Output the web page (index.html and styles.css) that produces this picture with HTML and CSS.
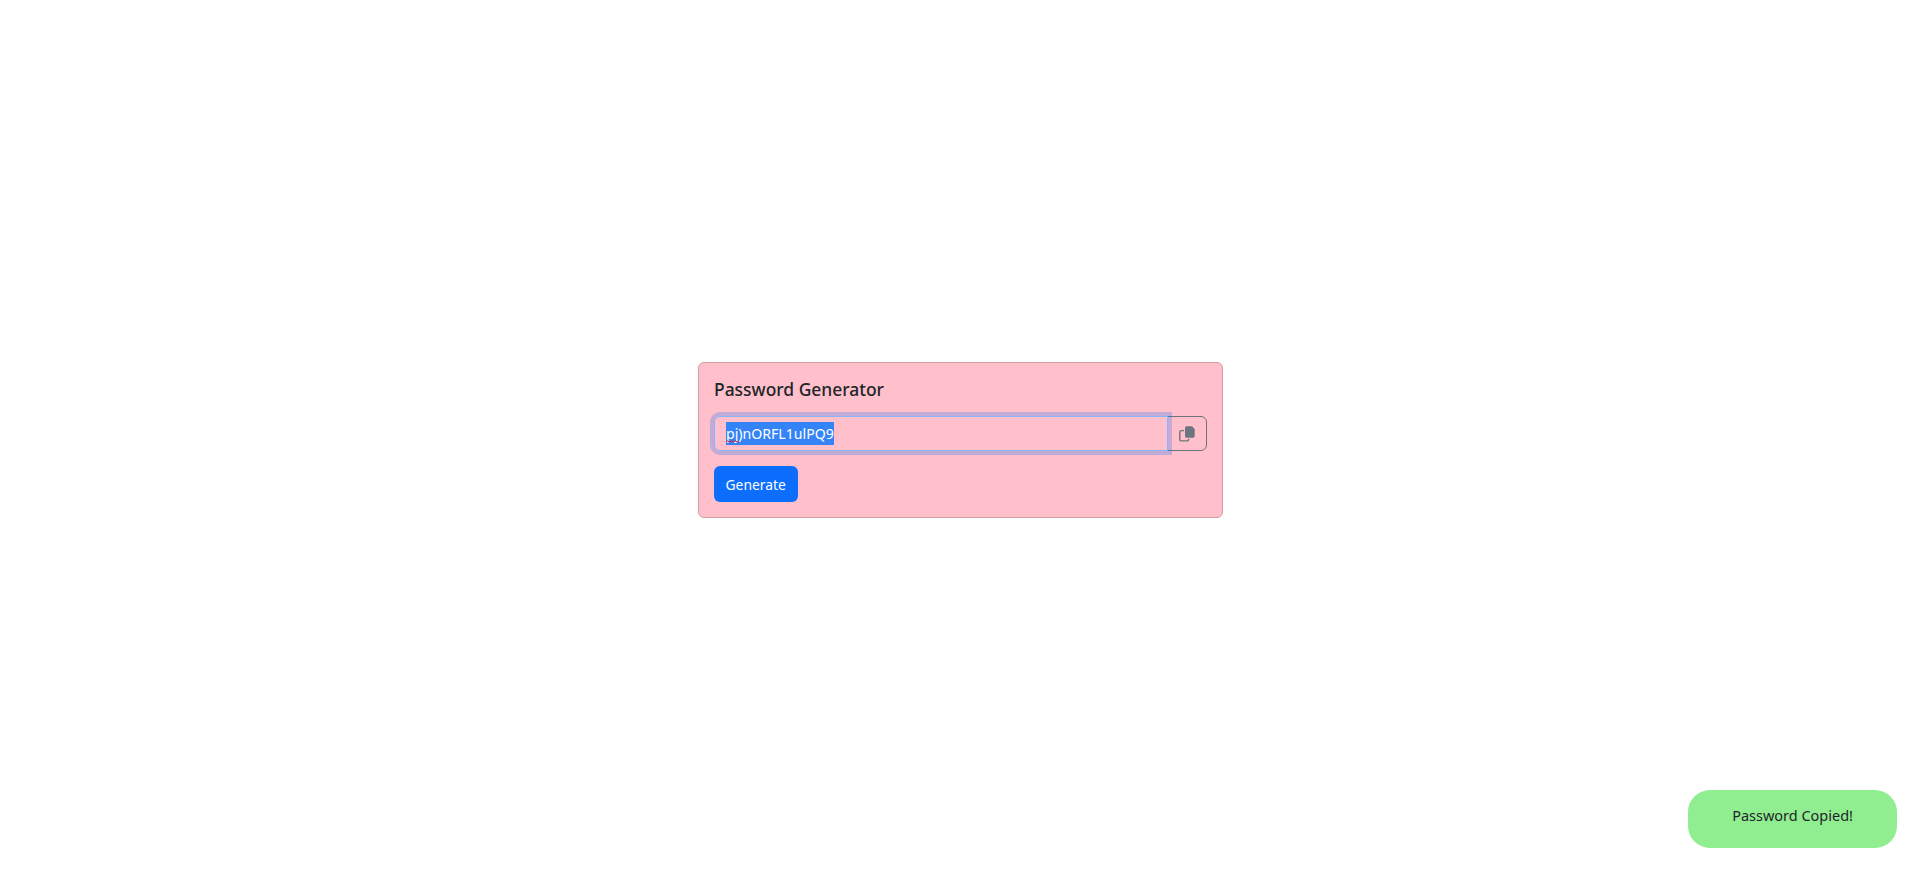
FILE: index.html
```html
<!DOCTYPE html>
<html lang="en">
<head>
<meta charset="utf-8">
<title>Password Generator</title>
<link rel="stylesheet" href="styles.css">
</head>
<body>
<main class="page">
  <section class="card">
    <h5 class="card-title"><span class="condensed title-text">Password Generator</span></h5>
    <div class="input-group">
      <div class="form-control">
        <div class="selected"><span class="condensed password-text">pj)nORFL1ulPQ9</span>
          <svg class="squiggle" width="13" height="3" viewBox="0 0 13 3" fill="none" stroke="#e01b24"><path d="M0 2.300L1.500 .7L3.500 2.300L5.500 .7L7.500 2.300L9.500 .7L11.500 2.300L13 1"/></svg>
        </div>
      </div>
      <button class="btn-copy" type="button" aria-label="Copy">
        <svg class="icon" viewBox="0 0 16 16" width="16" height="16" fill="currentColor">
          <path d="M6 2A1.700 1.700 0 0 1 7.700 .3H13L15.700 3V10A1.700 1.700 0 0 1 14 11.700H7.700A1.700 1.700 0 0 1 6 10Z"/>
          <path d="M5 4.600H2.200A1.400 1.400 0 0 0 .8 6V13.500A1.400 1.400 0 0 0 2.200 14.900H8.200A1.400 1.400 0 0 0 9.600 13.500V12.700" fill="none" stroke="currentColor" stroke-width="1.400"/>
        </svg>
      </button>
    </div>
    <button class="btn-primary" type="button"><span class="condensed button-text">Generate</span></button>
  </section>
</main>
<div class="toast"><span class="condensed toast-text">Password Copied!</span></div>
</body>
</html>
```
FILE: styles.css
```css
* { box-sizing: border-box; }
body {
  margin: 0;
  background: #fff;
  color: #212529;
  font-family: "Noto Sans", "Open Sans", sans-serif;
  font-size: 15px;
  line-height: 22.5px;
}
.page {
  display: flex;
  align-items: center;
  justify-content: center;
  height: 882px;
  padding-bottom: 2px;
}
.card {
  width: 525px;
  height: 156px;
  margin-left: 1px;
  padding: 15px;
  border: 1px solid #d19da5;
  border-radius: 6px;
  background: pink;
}
.condensed {
  display: inline-block;
  white-space: nowrap;
}
.title-text {
  transform: scaleX(.93);
  transform-origin: left;
}
.password-text {
  transform: scaleX(.94);
  transform-origin: left;
}
.button-text { transform: scaleX(.925); }
.toast-text { transform: scaleX(.965); }
.card-title {
  margin: 0 0 17px;
  font-size: 18.75px;
  font-weight: 500;
  line-height: 21px;
}
.input-group {
  display: flex;
  height: 35px;
  margin-bottom: 15px;
}
.form-control {
  z-index: 1;
  display: flex;
  align-items: center;
  width: 454px;
  padding: 0 11px;
  border: 1px solid #86b7fe;
  border-radius: 6px 0 0 6px;
  box-shadow: 0 0 0 4px rgba(13, 110, 253, .25);
}
.selected {
  position: relative;
  width: 108px;
  height: 23px;
  background: #3584f7;
  color: #fff;
  line-height: 23px;
}
.squiggle {
  position: absolute;
  left: 0;
  bottom: 2px;
}
.btn-copy {
  display: flex;
  align-items: center;
  justify-content: center;
  width: 40px;
  margin-left: -1px;
  padding: 0 1px 0 0;
  border: 1px solid #6c757d;
  border-radius: 0 6px 6px 0;
  background: transparent;
  color: #6c757d;
}
.btn-primary {
  display: block;
  width: 84px;
  height: 36px;
  padding: 0;
  border: 0;
  border-radius: 6px;
  background: #0d6efd;
  color: #fff;
  font: inherit;
}
.toast {
  position: fixed;
  right: 23px;
  bottom: 34px;
  width: 209px;
  height: 58px;
  padding-top: 14px;
  border-radius: 22px;
  background: lightgreen;
  text-align: center;
}
```
